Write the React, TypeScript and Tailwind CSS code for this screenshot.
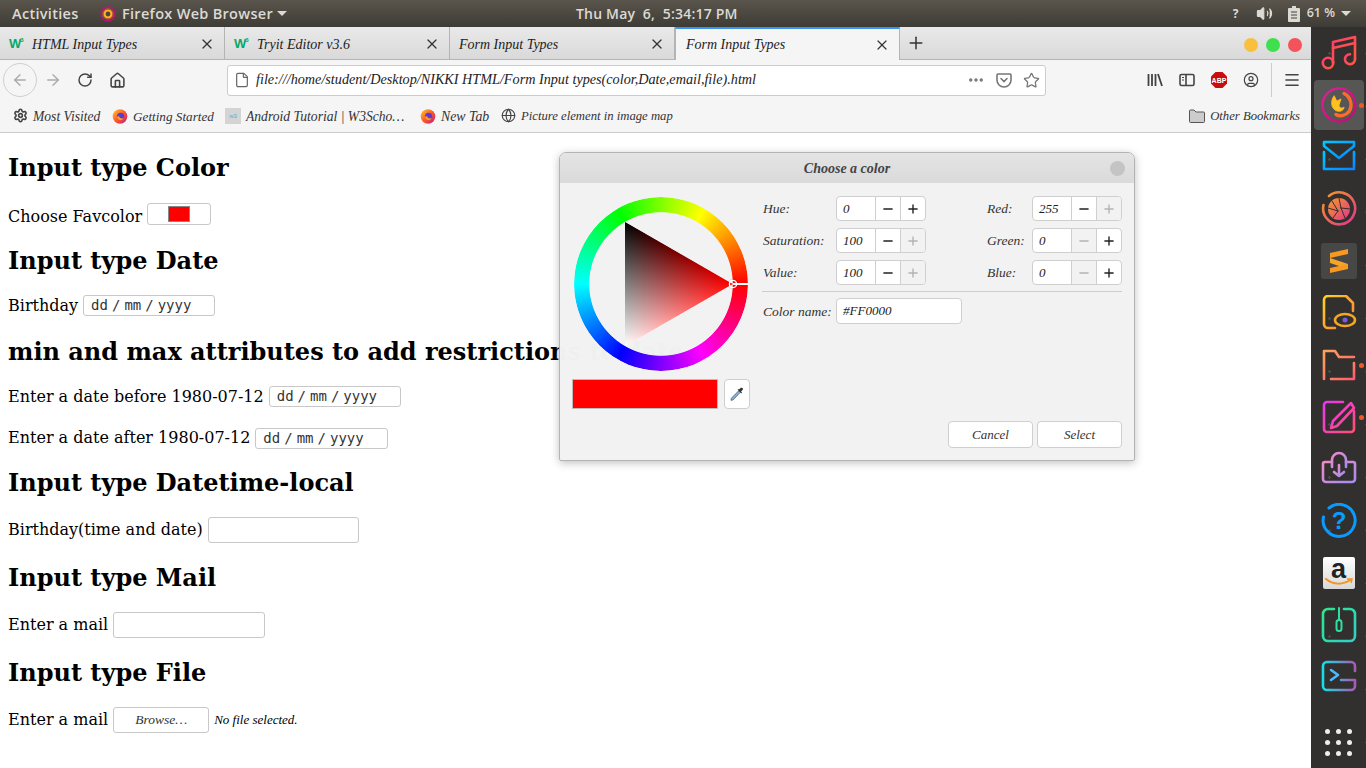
import React from "react";
import { ArrowLeft, ArrowRight, RotateCw, Home, File, Star, X, Plus, Minus, Settings, Globe, Menu, Ellipsis, Volume2, CircleUser } from "lucide-react";

const uiFont = "font-['Liberation_Serif',serif] italic";

const FirefoxFavicon = () => (
  <svg width="16" height="16" viewBox="0 0 16 16">
    <defs>
      <linearGradient id="ffFav" x1="0" y1="0" x2="1" y2="1">
        <stop offset="0" stopColor="#ffcb2d" />
        <stop offset="0.5" stopColor="#ff5a2a" />
        <stop offset="1" stopColor="#c0148c" />
      </linearGradient>
    </defs>
    <circle cx="8" cy="8.5" r="7.3" fill="url(#ffFav)" />
    <circle cx="8.6" cy="8.4" r="3.6" fill="#5b3bd0" />
    <path d="M5 8.5a3.6 3.6 0 0 0 7 1.2c-1 .8-2.6 1-3.6.3-.8-.5-1.2-1-1.1-1.8z" fill="#ff9b2a" />
  </svg>
);

const W3Logo = () => (
  <span className="flex w-4 items-start font-['Liberation_Sans',sans-serif] not-italic font-bold text-[#04aa6d]">
    <span className="text-[13px] leading-[14px] tracking-[-1px]">W</span>
    <span className="text-[6px] leading-[7px]">3</span>
  </span>
);

const Tab = ({ title, w3, active }: { title: string; w3?: boolean; active?: boolean }) => (
  <div
    className={
      active
        ? "flex h-[33px] w-[225px] items-center border-t-2 border-x border-t-[#3b93f0] border-x-[#b4b4b4] bg-[#f5f5f5] pl-[10px] pr-[9px]"
        : "flex h-[32px] w-[225px] items-center border-r border-[#b4b4b4] pt-[2px] pl-[9px] pr-[9px]"
    }
  >
    {w3 && <W3Logo />}
    <span className={`${uiFont} ${w3 ? "ml-[7px]" : "ml-0"} flex-1 text-[14px] text-[#222]`}>{title}</span>
    <X size={16} strokeWidth={1.8} className="text-[#333]" />
  </div>
);

const ToolSlot = ({ children }: { children: React.ReactNode }) => (
  <div className="flex h-8 w-8 items-center justify-center text-[#444]">{children}</div>
);

const Bookmark = ({ icon, label, className, textClass }: { icon: React.ReactNode; label: string; className?: string; textClass: string }) => (
  <div className={`flex items-center gap-[5px] ${className ?? ""}`}>
    <span className="flex w-4 justify-center text-[#444]">{icon}</span>
    <span className={`${uiFont} ${textClass} pt-[2px] whitespace-nowrap text-[#333]`}>{label}</span>
  </div>
);

const Heading = ({ children }: { children: React.ReactNode }) => (
  <h2 className="my-5 h-7 whitespace-nowrap text-[24px] leading-[30px] font-bold text-black">{children}</h2>
);

const DateField = ({ width, className }: { width: string; className?: string }) => (
  <div className={`flex h-[21px] ${width} ${className ?? ""} items-center gap-1 rounded-[3px] border border-[#c8c8c8] bg-white pl-[7px] font-['DejaVu_Sans_Mono',monospace] text-[14px] text-[#333]`}>
    <span>dd</span>
    <span>/</span>
    <span>mm</span>
    <span>/</span>
    <span>yyyy</span>
  </div>
);

const spinBase = "flex w-[25px] items-center justify-center border-l border-[#cfcfcf]";

const Spin = ({ value, minusOff, plusOff }: { value: string; minusOff?: boolean; plusOff?: boolean }) => (
  <div className="flex h-[25px] w-[90px] shrink-0 overflow-hidden rounded-[4px] border border-[#cfcfcf] bg-white">
    <span className={`${uiFont} flex-1 pl-[6px] text-[13px] leading-[23px] text-[#222]`}>{value}</span>
    <span className={`${spinBase} ${minusOff ? "bg-[#f2f2f2] text-[#b4b4b4]" : "text-[#222]"}`}>
      <Minus size={14} strokeWidth={2.4} />
    </span>
    <span className={`${spinBase} ${plusOff ? "bg-[#f2f2f2] text-[#b4b4b4]" : "text-[#222]"}`}>
      <Plus size={14} strokeWidth={2.4} />
    </span>
  </div>
);

const Label = ({ children, className }: { children: React.ReactNode; className: string }) => (
  <span className={`${uiFont} ${className} pt-[2px] text-[13.5px] text-[#333]`}>{children}</span>
);

const SpinRow = ({ left, right }: { left: [string, string, boolean?, boolean?]; right: [string, string, boolean?, boolean?] }) => (
  <div className="flex h-[25px] items-center">
    <Label className="w-[74px] pl-px">{left[0]}</Label>
    <Spin value={left[1]} minusOff={left[2]} plusOff={left[3]} />
    <Label className="ml-[61px] w-[45px]">{right[0]}</Label>
    <Spin value={right[1]} minusOff={right[2]} plusOff={right[3]} />
  </div>
);

// one vertical strip per column, top edge black -> red, bottom edge white -> red
const strips = Array.from({ length: 108 }, (_, i) => {
  const t = i / 107;
  const half = 62 * (1 - t);
  return { x: i, y: 87 - half, h: half * 2, top: Math.round(255 * t), low: Math.round(255 * (1 - t)) };
});

const ColorTriangle = () => (
  <svg width="174" height="174" viewBox="0 0 174 174" className="absolute top-0 left-0">
    <defs>
      <clipPath id="triClip">
        <polygon points="51,25 159,87 51,149" />
      </clipPath>
      {strips.map((s) => (
        <linearGradient key={s.x} id={`strip${s.x}`} x1="0" y1="0" x2="0" y2="1">
          <stop offset="0" stopColor={`rgb(${s.top},0,0)`} />
          <stop offset="1" stopColor={`rgb(255,${s.low},${s.low})`} />
        </linearGradient>
      ))}
    </defs>
    <g clipPath="url(#triClip)">
      {strips.map((s) => (
        <rect key={s.x} x={51 + s.x} y={s.y} width="1.5" height={Math.max(s.h, 0.5)} fill={`url(#strip${s.x})`} />
      ))}
    </g>
    <line x1="159" y1="87" x2="174" y2="87" stroke="#fff" strokeWidth="2" />
    <circle cx="159" cy="87" r="3.6" fill="none" stroke="#fff" strokeWidth="1.4" />
    <circle cx="159" cy="87" r="5" fill="none" stroke="#000" strokeOpacity="0.15" strokeWidth="0.6" />
  </svg>
);

const Eyedropper = () => (
  <svg width="16" height="16" viewBox="0 0 16 16">
    <path d="M9.5 5 2.6 12a1.5 1.5 0 0 0-.4 1L2 14.300l1.300-.2a1.500 1.500 0 0 0 1-.4L11 6.500z" fill="#8fb3dc" stroke="#4a5a6c" strokeWidth="0.8" />
    <path d="M8.600 3.800 12.200 7.400 13 6.600 12 5.600 13.800 3.800a1.500 1.500 0 0 0-2-2L10 3.600 9.400 3z" fill="#333" />
  </svg>
);

const ColorDialog = () => (
  <div className="absolute top-[19px] left-[559px] flex h-[309px] w-[576px] flex-col rounded-t-[7px] rounded-b-[2px] border border-[#b4b4b4] bg-[#f2f2f2]/99 shadow-[0_2px_8px_rgba(0,0,0,0.25)]">
    <div className="flex h-[30px] items-center rounded-t-[6px] bg-gradient-to-b from-[#e4e4e4] to-[#dadada] pr-[9px]">
      <span className={`${uiFont} flex-1 pl-[24px] text-center text-[14px] font-bold text-[#444]`}>Choose a color</span>
      <span className="h-[15px] w-[15px] rounded-full bg-[#c4c4c4]" />
    </div>
    <div className="flex flex-1 p-3">
      <div className="w-[178px]">
        <div className="relative mt-[2px] ml-[2px] h-[174px] w-[174px]">
          <div className="h-full w-full rounded-full bg-[conic-gradient(from_90deg,#f00,#f0f,#00f,#0ff,#0f0,#ff0,#f00)] [mask-image:radial-gradient(closest-side,transparent_82%,black_83%)]" />
          <ColorTriangle />
        </div>
        <div className="mt-2 flex items-stretch gap-[6px]">
          <div className="h-[30px] w-[146px] border border-[#bbb] bg-[#ff0000]" />
          <div className="flex w-[26px] items-center justify-center rounded-[4px] border border-[#cfcfcf] bg-white">
            <Eyedropper />
          </div>
        </div>
      </div>
      <div className="ml-3 flex flex-1 flex-col pt-px">
        <div className="flex flex-col gap-[7px]">
          <SpinRow left={["Hue:", "0"]} right={["Red:", "255", false, true]} />
          <SpinRow left={["Saturation:", "100", false, true]} right={["Green:", "0", true]} />
          <SpinRow left={["Value:", "100", false, true]} right={["Blue:", "0", true]} />
        </div>
        <div className="mt-[6px] h-px w-full bg-[#cdcdcd]" />
        <div className="mt-[6px] flex items-center">
          <Label className="w-[74px] pl-px">Color name:</Label>
          <div className={`${uiFont} h-[26px] w-[126px] rounded-[4px] border border-[#cfcfcf] bg-white pl-[6px] text-[13px] leading-[24px] text-[#222]`}>#FF0000</div>
        </div>
        <div className="mt-auto flex justify-end gap-1">
          <button className={`${uiFont} h-[27px] w-[85px] rounded-[4px] border border-[#cfcfcf] bg-white text-[13px] text-[#333]`}>Cancel</button>
          <button className={`${uiFont} h-[27px] w-[85px] rounded-[4px] border border-[#cfcfcf] bg-white text-[13px] text-[#333]`}>Select</button>
        </div>
      </div>
    </div>
  </div>
);

const Grad = ({ id, from, to }: { id: string; from: string; to: string }) => (
  <defs>
    <linearGradient id={id} x1="0" y1="0" x2="1" y2="1">
      <stop offset="0" stopColor={from} />
      <stop offset="1" stopColor={to} />
    </linearGradient>
  </defs>
);

const DockIcon = ({ id, from, to, children, strokeWidth = 2.6 }: { id: string; from: string; to: string; children: React.ReactNode; strokeWidth?: number }) => (
  <svg width="36" height="36" viewBox="0 0 36 36" fill="none" stroke={`url(#${id})`} strokeWidth={strokeWidth} strokeLinecap="round" strokeLinejoin="round">
    <Grad id={id} from={from} to={to} />
    {children}
  </svg>
);

const DockSlot = ({ children, active, dot, className }: { children: React.ReactNode; active?: boolean; dot?: boolean; className?: string }) => (
  <div className={`relative flex h-[52px] w-full shrink-0 items-center justify-center ${className ?? ""}`}>
    {active && <div className="absolute top-px left-[3px] h-[50px] w-[50px] rounded-[4px] bg-[#565654]" />}
    <div className="relative flex">{children}</div>
    {dot && <div className="absolute top-[24px] right-[2px] h-[5px] w-[5px] rounded-full bg-[#f0582a]" />}
  </div>
);

const Dock = () => (
  <div className="flex w-[55px] shrink-0 flex-col bg-[#31302e] bg-[radial-gradient(circle,#4b4b49_1px,transparent_1.5px)] bg-[length:37px_53px]">
    <DockSlot>
      <DockIcon id="dkMusic" from="#ff3f6c" to="#ff5a3c">
        <circle cx="7" cy="28" r="5.2" />
        <path d="M12 28V7L34 2V24" />
        <path d="M12 13L34 8" />
        <path d="M34 24a5 5 0 1 1-5-4.800" />
      </DockIcon>
    </DockSlot>
    <DockSlot active dot>
      <DockIcon id="dkFox" from="#e0209a" to="#b80f70" strokeWidth={2.4}>
        <circle cx="18" cy="18" r="16.500" />
        <path d="M23 6.500a12.500 12.500 0 0 1 5 18c-3 4-9 5.500-13 3" stroke="#ff6a2a" strokeWidth="3.400" />
        <path d="M13 9c-4 5-3 13 3 15 4 1 7-1 7-4-2 2-5 1-5-2l2-6-4 2z" fill="#ffc31f" stroke="#ffb020" strokeWidth="1" />
      </DockIcon>
    </DockSlot>
    <DockSlot>
      <DockIcon id="dkMail" from="#00c8ff" to="#0a84ff">
        <path d="M3 3H33V7L18 19L3 7Z" />
        <path d="M3 13V30H33V13" />
      </DockIcon>
    </DockSlot>
    <DockSlot>
      <DockIcon id="dkShot" from="#f59a2a" to="#e0368a">
        <path d="M8 5A16 16 0 1 1 2.500 14" />
        <circle cx="18" cy="18" r="11" fill="url(#dkShot)" stroke="none" />
        <path d="M18 7L20 17M29 18L20 17M24 27L20 17M12 27L17 20M7 17L17 20M11 10L17 20" stroke="#31302e" strokeWidth="1" />
      </DockIcon>
    </DockSlot>
    <DockSlot>
      <svg width="36" height="36" viewBox="0 0 36 36">
        <rect width="36" height="36" rx="3" fill="#474746" />
        <path d="M9 15V10L27 6V11Z" fill="#f89820" />
        <path d="M9 15L27 21V26L9 20Z" fill="#f5a52c" />
        <path d="M9 25V30L27 26V21Z" fill="#f89820" />
      </svg>
    </DockSlot>
    <DockSlot>
      <DockIcon id="dkFile" from="#ffd21f" to="#ff7a3c">
        <path d="M14 33H7a4 4 0 0 1-4-4V5a4 4 0 0 1 4-4H25L32 8V16" />
        <ellipse cx="24" cy="25" rx="10" ry="6" stroke="#f5a623" />
        <circle cx="24" cy="25" r="2.500" fill="#7a5cd6" stroke="none" />
      </DockIcon>
    </DockSlot>
    <DockSlot dot>
      <DockIcon id="dkDir" from="#ffa25c" to="#ff5a6e">
        <path d="M3 32V4H14L18 10H33" />
        <path d="M33 16V32H10" />
      </DockIcon>
    </DockSlot>
    <DockSlot dot>
      <DockIcon id="dkNote" from="#e838f0" to="#ff4f74">
        <path d="M22 3H6a3 3 0 0 0-3 3V30a3 3 0 0 0 3 3H30a3 3 0 0 0 3-3V12" />
        <path d="M30 4L12 22L10 29L16 27L33 9Z" />
      </DockIcon>
    </DockSlot>
    <DockSlot>
      <DockIcon id="dkBag" from="#f08ac4" to="#a48cf4">
        <path d="M11 11H4a2 2 0 0 0-2 2V28a3 3 0 0 0 3 3H31a3 3 0 0 0 3-3V13a2 2 0 0 0-2-2H25" />
        <path d="M11 16V9a7 7 0 0 1 14 0V16" />
        <path d="M18 14V25M13 21L18 25L23 21" />
      </DockIcon>
    </DockSlot>
    <DockSlot>
      <svg width="36" height="36" viewBox="0 0 36 36" fill="none">
        <path d="M8 5A16 16 0 1 1 2.500 14" stroke="#0a9bff" strokeWidth="3" strokeLinecap="round" />
        <text x="18" y="26" textAnchor="middle" fontFamily="Liberation Sans" fontWeight="700" fontSize="24" fill="#0a9bff">?</text>
      </svg>
    </DockSlot>
    <DockSlot>
      <div className="relative flex h-8 w-8 justify-center rounded-[2px] bg-gradient-to-b from-white to-[#d8d8d8]">
        <span className="font-['Liberation_Sans',sans-serif] text-[27px] leading-[25px] font-bold text-[#222]">a</span>
        <svg width="30" height="10" viewBox="0 0 30 10" className="absolute top-[21px] left-px" fill="none">
          <path d="M2 1c7 6 17 6 24 1" stroke="#f4931e" strokeWidth="2" strokeLinecap="round" />
          <path d="M23 1l5 0-1 4" stroke="#f4931e" strokeWidth="1.500" />
        </svg>
      </div>
    </DockSlot>
    <DockSlot>
      <DockIcon id="dkMouse" from="#2ee68c" to="#30cfc8">
        <path d="M13 2H7a5 5 0 0 0-5 5V29a5 5 0 0 0 5 5H29a5 5 0 0 0 5-5V7a5 5 0 0 0-5-5H23" />
        <path d="M18 1V13" stroke="#2ee0a0" strokeWidth="2" />
        <rect x="15.500" y="13" width="5" height="11" rx="2.500" stroke="#2ee0a0" strokeWidth="2" />
      </DockIcon>
    </DockSlot>
    <DockSlot>
      <svg width="36" height="36" viewBox="0 0 36 36" fill="none" strokeWidth="2.600" strokeLinecap="round" strokeLinejoin="round">
        <defs>
          <linearGradient id="dkTerm" x1="0" y1="0" x2="1" y2="0">
            <stop offset="0" stopColor="#18dce8" />
            <stop offset="1" stopColor="#a85ab4" />
          </linearGradient>
        </defs>
        <path d="M34 12V7a4 4 0 0 0-4-4H6a4 4 0 0 0-4 4V27a4 4 0 0 0 4 4H30a4 4 0 0 0 4-4V21H20" stroke="url(#dkTerm)" />
        <path d="M10 11L17 16L10 21" stroke="#4db8ff" />
      </svg>
    </DockSlot>
    <DockSlot className="mt-[13px]">
      <div className="grid grid-cols-3 gap-[6px]">
        {Array.from({ length: 9 }).map((_, i) => (
          <span key={i} className="h-[5px] w-[5px] rounded-full bg-[#eeeeee]" />
        ))}
      </div>
    </DockSlot>
  </div>
);

const TopBar = () => (
  <div className="flex h-[27px] shrink-0 items-center bg-gradient-to-b from-[#5a554c] to-[#3e3c36] pr-[15px] font-['Open_Sans',sans-serif] text-[14.5px] font-semibold tracking-[0.3px] text-[#dcdad4]">
    <span className="ml-3 w-[88px]">Activities</span>
    <svg width="16" height="16" viewBox="0 0 16 16" fill="none" className="mr-[6px]">
      <circle cx="8" cy="8" r="7" stroke="#c4107a" strokeWidth="1.300" />
      <circle cx="8" cy="8" r="3.500" stroke="#ffb020" strokeWidth="2.200" />
      <circle cx="8" cy="8" r="5.200" stroke="#e8562a" strokeWidth="0.800" />
    </svg>
    <span className="whitespace-nowrap">Firefox Web Browser</span>
    <span className="ml-[4px] h-0 w-0 border-x-[5px] border-t-[5px] border-x-transparent border-t-[#dcdad4]" />
    <span className="ml-[289px] text-[14px] tracking-[0.2px] whitespace-nowrap">Thu May&nbsp; 6,&nbsp; 5:34:17 PM</span>
    <span className="ml-auto text-[12px] font-bold">?</span>
    <Volume2 size={17} className="ml-[17px]" fill="#dcdad4" strokeWidth={1.600} />
    <svg width="12" height="16" viewBox="0 0 12 16" className="ml-[15px]">
      <path d="M4 0h4v2h3a1 1 0 0 1 1 1v12a1 1 0 0 1-1 1H1a1 1 0 0 1-1-1V3a1 1 0 0 1 1-1h3z" fill="#dcdad4" />
      <path d="M3 6h6M3 9h6M3 12h6" stroke="#45423c" strokeWidth="1.200" />
    </svg>
    <span className="ml-[7px] text-[12.5px] tracking-normal">61 %</span>
    <span className="ml-[6px] h-0 w-0 border-x-[5px] border-t-[5px] border-x-transparent border-t-[#dcdad4]" />
  </div>
);

const TabStrip = () => (
  <div className="flex h-[33px] items-start border-b border-[#b4b4b4] bg-gradient-to-b from-[#e9e9e9] to-[#d9d9d9]">
    <Tab title="HTML Input Types" w3 />
    <Tab title="Tryit Editor v3.6" w3 />
    <Tab title="Form Input Types" />
    <div className="-mb-px">
      <Tab title="Form Input Types" active />
    </div>
    <Plus size={20} strokeWidth={1.800} className="mt-[6px] ml-[6px] text-[#333]" />
    <div className="mt-[11px] mr-[9px] ml-auto flex gap-2">
      <span className="h-[14px] w-[14px] rounded-full bg-[#f8c03e]" />
      <span className="h-[14px] w-[14px] rounded-full bg-[#3ee04e]" />
      <span className="h-[14px] w-[14px] rounded-full bg-[#f4535c]" />
    </div>
  </div>
);

const NavBar = () => (
  <div className="flex h-10 items-center bg-[#f5f5f5] pl-[3px]">
    <div className="flex h-[34px] w-[34px] items-center justify-center rounded-full border border-[#cfcfcf] text-[#aaa]">
      <ArrowLeft size={18} strokeWidth={1.800} />
    </div>
    <div className="flex h-8 w-8 items-center justify-center text-[#aaa]">
      <ArrowRight size={18} strokeWidth={1.800} />
    </div>
    <ToolSlot>
      <RotateCw size={16} strokeWidth={2.200} />
    </ToolSlot>
    <ToolSlot>
      <Home size={17} strokeWidth={2.200} />
    </ToolSlot>
    <div className="ml-[94px] flex h-[31px] w-[819px] items-center rounded-[3px] border border-[#cccccc] bg-white pl-[6px] text-[#666]">
      <File size={16} strokeWidth={1.800} />
      <span className={`${uiFont} ml-[6px] flex-1 text-[14.2px] whitespace-nowrap text-[#222]`}>file:///home/student/Desktop/NIKKI HTML/Form Input types(color,Date,email,file).html</span>
      <Ellipsis size={18} strokeWidth={2.600} className="mr-px text-[#777]" />
      <svg width="16" height="16" viewBox="0 0 16 16" fill="none" stroke="#777" strokeWidth="1.600" className="ml-[10px]">
        <path d="M1 3a1 1 0 0 1 1-1h12a1 1 0 0 1 1 1v5a7 7 0 0 1-14 0z" />
        <path d="M5 6.500l3 3 3-3" strokeLinecap="round" />
      </svg>
      <Star size={17} strokeWidth={1.800} className="mr-[5px] ml-[11px] text-[#777]" />
    </div>
    <div className="ml-[93px] flex items-center">
      <ToolSlot>
        <svg width="16" height="16" viewBox="0 0 16 16" stroke="#444" strokeWidth="1.800" fill="none">
          <path d="M1.500 2v12M5 2v12M8.500 2v12M11 2l4 12" />
        </svg>
      </ToolSlot>
      <ToolSlot>
        <svg width="16" height="16" viewBox="0 0 16 16" stroke="#444" strokeWidth="1.600" fill="none">
          <rect x="1" y="2.500" width="14" height="11" rx="1.500" />
          <path d="M7 2.500v11" />
          <path d="M3 5.500h2M3 8h2" strokeWidth="1" />
        </svg>
      </ToolSlot>
      <ToolSlot>
        <svg width="18" height="18" viewBox="0 0 18 18">
          <polygon points="5.500,1 12.500,1 17,5.500 17,12.500 12.500,17 5.500,17 1,12.500 1,5.500" fill="#c70d0d" />
          <text x="9" y="11.800" textAnchor="middle" fontFamily="Liberation Sans" fontWeight="700" fontSize="7" fill="#fff">ABP</text>
        </svg>
      </ToolSlot>
      <ToolSlot>
        <CircleUser size={16} strokeWidth={1.800} />
      </ToolSlot>
      <div className="ml-1 h-[34px] w-px bg-[#cccccc]" />
      <div className="ml-1 flex h-8 w-8 items-center justify-center text-[#444]">
        <Menu size={18} strokeWidth={2.200} />
      </div>
    </div>
  </div>
);

const BookmarksBar = () => (
  <div className="flex h-[33px] items-center border-b border-[#cccccc] bg-[#f5f5f5] pr-[11px] pl-3">
    <Bookmark icon={<Settings size={15} strokeWidth={2.600} />} label="Most Visited" textClass="w-[68px] text-[13.6px]" />
    <Bookmark icon={<FirefoxFavicon />} label="Getting Started" textClass="w-[81px] text-[13.2px]" className="ml-[11px]" />
    <Bookmark
      icon={<span className="flex h-4 w-4 items-center justify-center bg-[#d4d4d4] font-['Liberation_Sans',sans-serif] text-[6px] leading-none text-[#3eb6d8]">w3</span>}
      label="Android Tutorial | W3Scho…"
      textClass="w-[161px] text-[13.6px]"
      className="ml-[11px]"
    />
    <Bookmark icon={<FirefoxFavicon />} label="New Tab" textClass="w-12 text-[13.8px]" className="ml-[13px]" />
    <Bookmark icon={<Globe size={15} strokeWidth={1.800} />} label="Picture element in image map" textClass="w-[151px] text-[12.7px]" className="ml-[11px]" />
    <Bookmark
      icon={
        <svg width="16" height="14" viewBox="0 0 16 14" fill="#ccc" stroke="#555" strokeWidth="1">
          <path d="M.500 2a1 1 0 0 1 1-1H5l2 2h7.500a1 1 0 0 1 1 1v8.500a1 1 0 0 1-1 1h-13a1 1 0 0 1-1-1z" />
        </svg>
      }
      label="Other Bookmarks"
      textClass="text-[12.7px]"
      className="ml-auto"
    />
  </div>
);

const PageContent = () => (
  <div className="relative flex-1 overflow-hidden bg-white pl-2 font-['DejaVu_Serif',serif] text-[16px] text-black">
    <Heading>Input type Color</Heading>
    <div className="flex h-[25px] items-start gap-[5px]">
      <span className="mt-[4px]">Choose Favcolor</span>
      <div className="mt-[2px] flex h-[22px] w-16 items-center justify-center rounded-[3px] border border-[#c8c8c8] bg-white">
        <span className="h-4 w-[22px] border border-[#888] bg-[#ff0000]" />
      </div>
    </div>
    <Heading>Input type Date</Heading>
    <div className="flex h-[23px] items-center gap-[5px]">
      <span>Birthday</span>
      <DateField width="w-[132px]" />
    </div>
    <Heading>min and max attributes to add restrictions to date</Heading>
    <div className="flex h-[23px] items-center gap-[5px]">
      <span>Enter a date before 1980-07-12</span>
      <DateField width="w-[132px]" />
    </div>
    <div className="mt-[18px] flex h-[22px] items-center gap-[5px]">
      <span className="pt-[2px]">Enter a date after 1980-07-12</span>
      <DateField width="w-[133px]" className="mt-[2px]" />
    </div>
    <Heading>Input type Datetime-local</Heading>
    <div className="flex h-[27px] items-center gap-[5px]">
      <span>Birthday(time and date)</span>
      <div className="h-[26px] w-[151px] rounded-[3px] border border-[#c8c8c8] bg-white" />
    </div>
    <Heading>Input type Mail</Heading>
    <div className="flex h-[27px] items-center gap-[5px]">
      <span>Enter a mail</span>
      <div className="h-[26px] w-[152px] rounded-[3px] border border-[#c8c8c8] bg-white" />
    </div>
    <Heading>Input type File</Heading>
    <div className="flex h-[27px] items-center gap-[5px]">
      <span>Enter a mail</span>
      <div className={`${uiFont} flex h-[26px] w-24 items-center justify-center rounded-[3px] border border-[#c8c8c8] bg-white pt-[2px] text-[13.5px] text-[#333]`}>Browse…</div>
      <span className={`${uiFont} text-[13px]`}>No file selected.</span>
    </div>
    <ColorDialog />
  </div>
);

export default function App() {
  return (
    <div className="flex h-[768px] w-[1366px] flex-col overflow-hidden">
      <TopBar />
      <div className="flex min-h-0 flex-1">
        <div className="flex min-w-0 flex-1 flex-col">
          <TabStrip />
          <NavBar />
          <BookmarksBar />
          <PageContent />
        </div>
        <Dock />
      </div>
    </div>
  );
}
